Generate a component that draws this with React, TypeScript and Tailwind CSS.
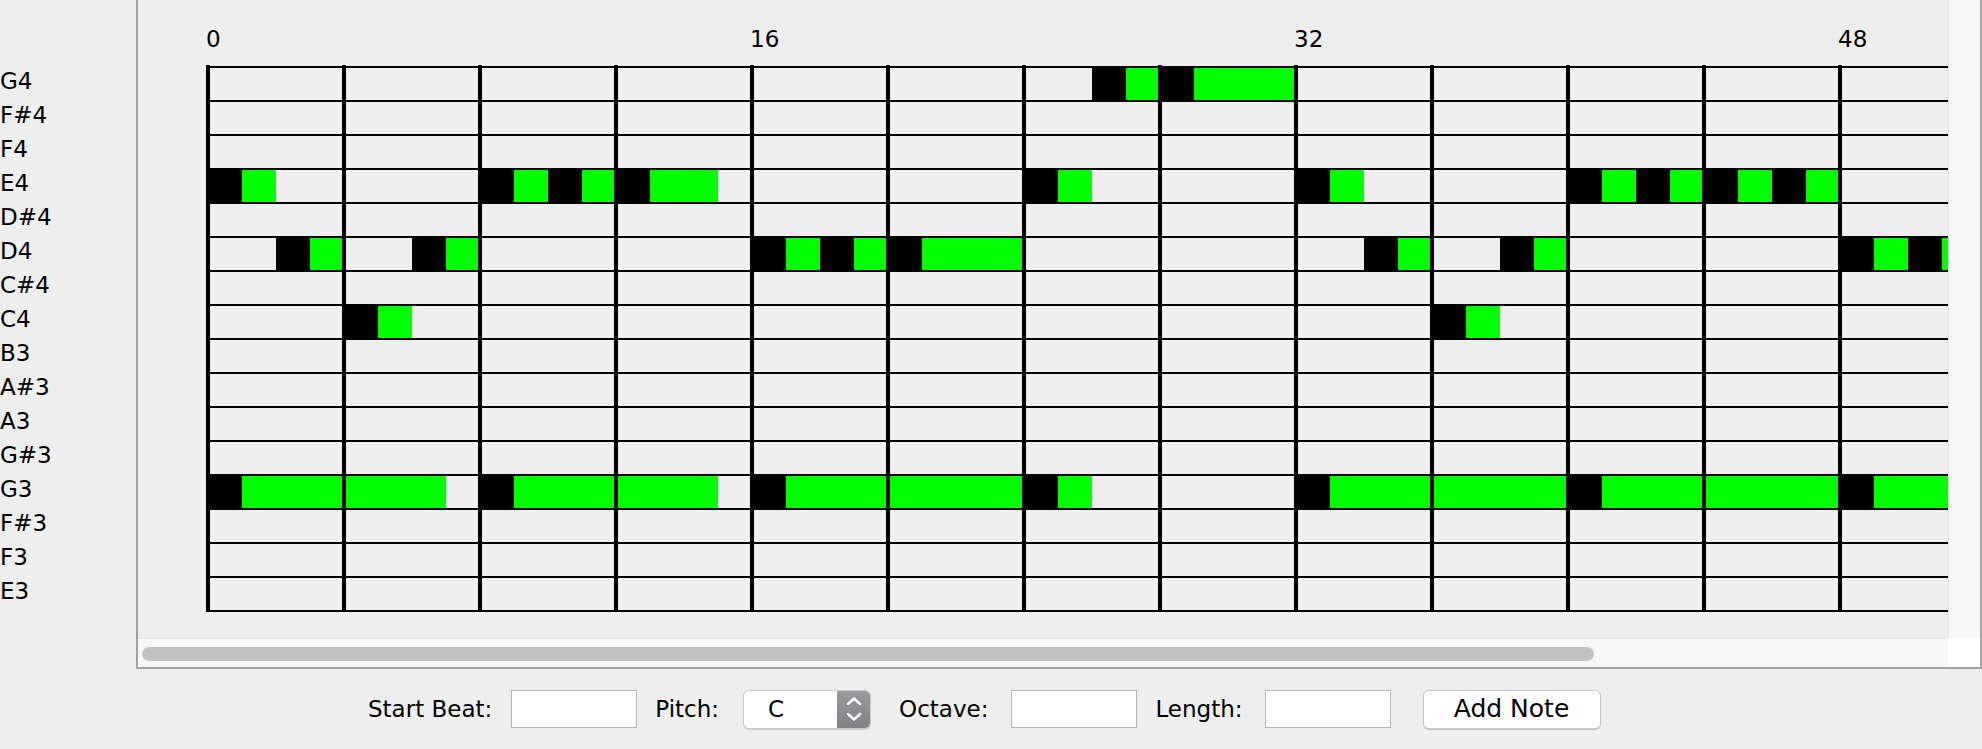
import React from "react";

const PITCHES = ["G4", "F#4", "F4", "E4", "D#4", "D4", "C#4", "C4", "B3", "A#3", "A3", "G#3", "G3", "F#3", "F3", "E3"];

const BEATS = 64;
const CELL = 34;
const LEFT = 70;
const TOP = 66;

// [row, start beat, length]
const NOTES: [number, number, number][] = [
  [0, 26, 2], [0, 28, 4],
  [3, 0, 2], [3, 8, 2], [3, 10, 2], [3, 12, 3], [3, 24, 2], [3, 32, 2],
  [3, 40, 2], [3, 42, 2], [3, 44, 2], [3, 46, 2], [3, 52, 2],
  [5, 2, 2], [5, 6, 2], [5, 16, 2], [5, 18, 2], [5, 20, 4], [5, 34, 2],
  [5, 38, 2], [5, 48, 2], [5, 50, 2], [5, 54, 2],
  [7, 4, 2], [7, 36, 2], [7, 56, 8],
  [12, 0, 7], [12, 8, 7], [12, 16, 8], [12, 24, 2], [12, 32, 8],
  [12, 40, 8], [12, 48, 8], [12, 56, 8],
];

const Grid = () => {
  const width = LEFT + BEATS * CELL + 4;
  return (
    <svg width={width} height={638} className="block">
      {[0, 16, 32, 48].map((b) => (
        <text key={b} x={LEFT - 2 + b * CELL} y={47} fontSize={23} fill="#000">
          {b}
        </text>
      ))}
      {NOTES.map(([r, s, len], i) => (
        <g key={i}>
          <rect x={LEFT + s * CELL} y={TOP + r * CELL} width={CELL} height={36} fill="#000" />
          {len > 1 && (
            <rect x={LEFT + (s + 1) * CELL} y={TOP + r * CELL} width={(len - 1) * CELL} height={36} fill="#00ff00" />
          )}
        </g>
      ))}
      {Array.from({ length: PITCHES.length + 1 }).map((_, k) => (
        <rect key={k} x={LEFT} y={TOP + k * CELL} width={BEATS * CELL} height={2} fill="#000" />
      ))}
      {Array.from({ length: BEATS / 4 + 1 }).map((_, m) => (
        <rect key={m} x={LEFT - 2 + m * 4 * CELL} y={65} width={4} height={PITCHES.length * CELL + 3} fill="#000" />
      ))}
    </svg>
  );
};

const Field = () => (
  <div className="w-[126px] h-[38px] bg-white border border-[#b4b4b4]" />
);

export default function App() {
  return (
    <div className="w-[1982px] h-[749px] bg-[#eeeeee] overflow-hidden font-['DejaVu_Sans',sans-serif] text-black">
      <div className="flex h-[669px]">
        <div className="w-[136px] pt-[64px] text-[23px]">
          {PITCHES.map((p) => (
            <div key={p} className="h-[34px] leading-[34px]">
              {p}
            </div>
          ))}
        </div>
        <div className="w-[1846px] h-[669px] border-l-2 border-r-2 border-b-2 border-[#a2a2a2] flex flex-col">
          <div className="flex h-[638px]">
            <div className="w-[1810px] h-[638px] overflow-hidden bg-[#eeeeee]">
              <Grid />
            </div>
            <div className="w-[32px] bg-[#f8f8f8] border-l border-[#e4e4e4]" />
          </div>
          <div className="flex h-[29px]">
            <div className="w-[1810px] bg-[#f8f8f8] border-t border-[#e8e8e8] pl-[4px] pt-[8px]">
              <div className="w-[1452px] h-[14px] rounded-full bg-[#c1c1c1]" />
            </div>
            <div className="w-[32px] bg-white" />
          </div>
        </div>
      </div>

      <div className="h-[80px] flex items-center pl-[368px] text-[23px]">
        <span>Start Beat:</span>
        <div className="ml-[19px]">
          <Field />
        </div>
        <span className="ml-[18px]">Pitch:</span>
        <div className="ml-[24px] w-[128px] h-[39px] flex rounded-[6px] bg-white border border-[#c9c9c9] shadow-[0_1px_1px_rgba(0,0,0,0.15)] overflow-hidden">
          <div className="flex-1 pl-[24px] leading-[37px]">C</div>
          <div className="w-[33px] bg-gradient-to-b from-[#9a9a9e] to-[#808085] flex flex-col items-center justify-center gap-[8px]">
            <svg width="16" height="8" viewBox="0 0 16 8">
              <path d="M2 7 L8 1.5 L14 7" fill="none" stroke="#fff" strokeWidth="2.4" strokeLinecap="round" strokeLinejoin="round" />
            </svg>
            <svg width="16" height="8" viewBox="0 0 16 8">
              <path d="M2 1 L8 6.5 L14 1" fill="none" stroke="#fff" strokeWidth="2.4" strokeLinecap="round" strokeLinejoin="round" />
            </svg>
          </div>
        </div>
        <span className="ml-[28px]">Octave:</span>
        <div className="ml-[23px]">
          <Field />
        </div>
        <span className="ml-[18px]">Length:</span>
        <div className="ml-[22px]">
          <Field />
        </div>
        <button className="ml-[32px] w-[178px] h-[39px] rounded-[6px] bg-white border border-[#c6c6c6] shadow-[0_1px_1px_rgba(0,0,0,0.2)] text-[25px] leading-[36px] text-center">
          Add Note
        </button>
      </div>
    </div>
  );
}
